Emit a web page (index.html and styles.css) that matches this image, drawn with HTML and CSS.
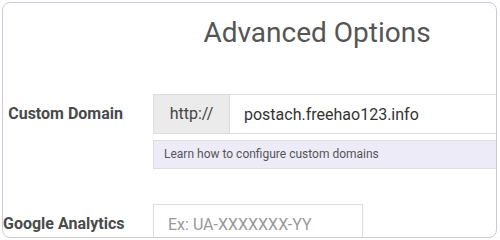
FILE: index.html
```html
<!DOCTYPE html>
<html lang="en">
<head>
    <meta charset="UTF-8">
    <meta name="viewport" content="width=device-width, initial-scale=1.0">
    <title>Advanced Options</title>
    <link rel="stylesheet" href="styles.css">
</head>
<body>

    <div class="options_card">
        <h1 class="title">Advanced Options</h1>

        <div class="form-row">
            <label class="row-label" for="custom-domain">Custom Domain</label>
            <div class="control">
                <div class="input-group">
                    <span class="addon">http://</span>
                    <input type="text" id="custom-domain" class="field" value="postach.freehao123.info">
                </div>
                <p class="help">Learn how to configure custom domains</p>
            </div>
        </div>

        <div class="form-row ga-row">
            <label class="row-label" for="ga-code">Google Analytics</label>
            <div class="control">
                <input type="text" id="ga-code" class="field ga" placeholder="Ex: UA-XXXXXXX-YY">
            </div>
        </div>
    </div>

</body>
</html>
```

FILE: styles.css
```css
*{
    padding: 0;
    margin: 0;
    box-sizing: border-box;
}

body{
    background-color: #fff;
    font-family: Roboto, "Liberation Sans", sans-serif;
}

.options_card{
    margin: 2px 0 0 2px;
    width: 495px;
    height: 236px;
    border: 1px solid #cdc8df;
    border-radius: 8px;
    overflow: hidden;
}

.title{
    margin: 12px 0 0 133px;
    width: 362px;
    text-align: center;
    font-size: 28px;
    line-height: 36px;
    font-weight: 400;
    color: #555;
}

.form-row{
    display: grid;
    grid-template-columns: 120px 360px;
    column-gap: 30px;
    align-items: start;
    margin-top: 43px;
}

.ga-row{
    margin-top: 35px;
}

.row-label{
    text-align: right;
    white-space: nowrap;
    font-size: 16px;
    font-weight: 700;
    color: #4a4a4a;
    line-height: 40px;
}

.input-group{
    display: flex;
    height: 40px;
}

.addon{
    width: 76px;
    background-color: #ebebeb;
    border: 1px solid #ddd;
    border-right: none;
    font-size: 16px;
    line-height: 38px;
    color: #444;
    text-align: center;
}

.field{
    height: 40px;
    border: 1px solid #ddd;
    padding: 0 14px;
    font-family: inherit;
    font-size: 16px;
    color: #333;
    outline: none;
}

.input-group .field{
    flex: 1;
}

.field::placeholder{
    color: #999;
}

.ga{
    width: 210px;
}

.help{
    margin-top: 6px;
    height: 29px;
    border: 1px solid #ddd;
    background-color: #eeebf9;
    padding-left: 10px;
    font-size: 12px;
    line-height: 27px;
    color: #555;
}
```
